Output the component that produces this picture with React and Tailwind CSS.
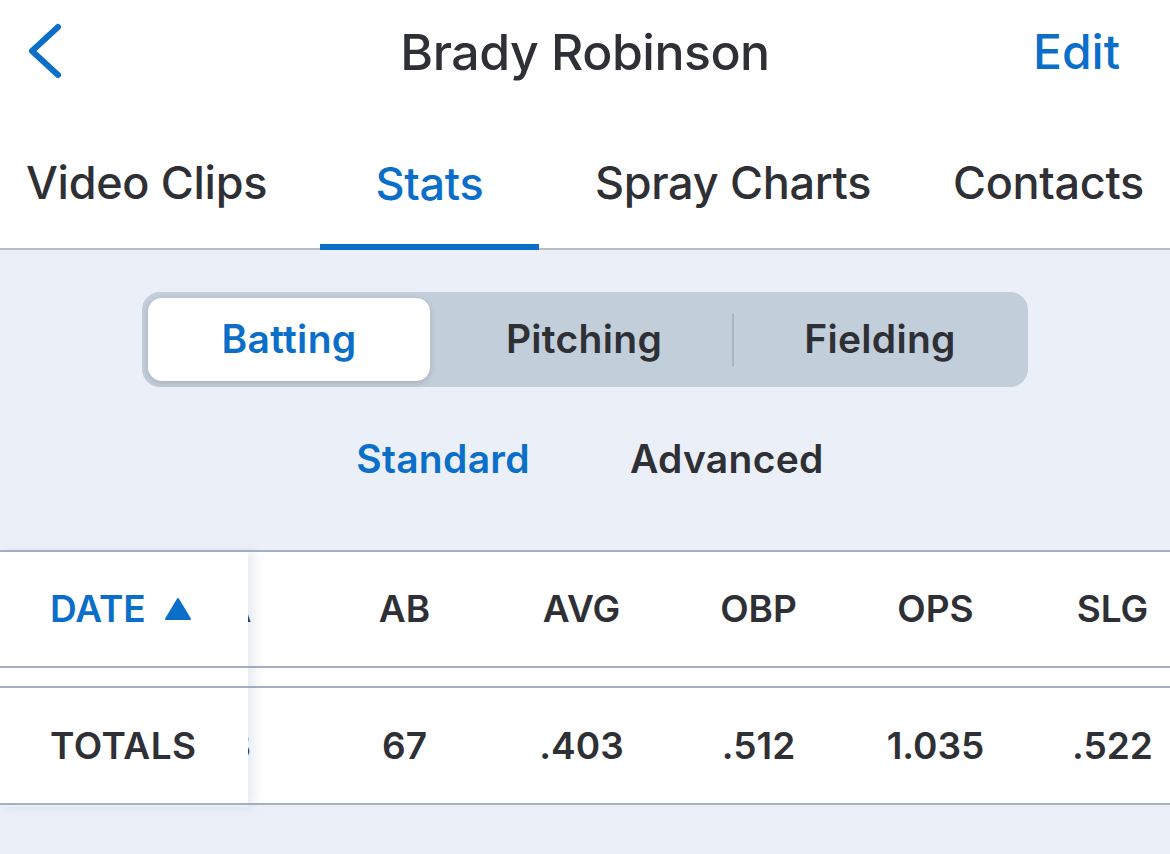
import React from "react";

const cols = [
  { key: "PA", total: "83" },
  { key: "AB", total: "67" },
  { key: "AVG", total: ".403" },
  { key: "OBP", total: ".512" },
  { key: "OPS", total: "1.035" },
  { key: "SLG", total: ".522" },
];

function App() {
  return (
    <div
      className="w-[1170px] h-[854px] overflow-hidden bg-[#ebf0f8] text-[#2e3035]"
      style={{ fontFamily: "Inter, 'Noto Sans', sans-serif" }}
    >
      {/* NAV */}
      <div className="bg-white">
        <div className="h-[104px] grid grid-cols-[1fr_auto_1fr] items-center px-[28px]">
          <svg width="36" height="56" viewBox="0 0 36 56" className="-mt-[2px]">
            <path
              d="M30 4 L4 28 L30 52"
              fill="none"
              stroke="#0b6fca"
              strokeWidth="6"
              strokeLinecap="round"
              strokeLinejoin="round"
            />
          </svg>
          <h1 className="text-[50px] font-medium tracking-[-0.5px]">
            Brady Robinson
          </h1>
          <span className="text-[48px] font-medium text-[#0b6fca] pr-[22px] justify-self-end">Edit</span>
        </div>

        {/* TABS */}
        <div className="flex h-[146px] border-b-2 border-[#b5bdc9]">
          <div className="w-[320px] flex items-center pl-[26px] pt-[14px] text-[45px] font-medium tracking-[-0.3px]">
            Video Clips
          </div>
          <div className="w-[219px] flex items-center justify-center pt-[20px] text-[45px] font-medium tracking-[-0.3px] text-[#0b6fca] border-b-[6px] border-[#0b6fca] -mb-[2px]">
            Stats
          </div>
          <div className="w-[388px] flex items-center justify-center pt-[14px] text-[45px] font-medium tracking-[-0.3px]">
            Spray Charts
          </div>
          <div className="w-[243px] flex items-center justify-center pt-[14px] text-[45px] font-medium tracking-[-0.3px] whitespace-nowrap">
            Contacts
          </div>
        </div>
      </div>

      {/* SEGMENTED */}
      <div className="flex justify-center pt-[42px]">
        <div className="w-[886px] h-[95px] rounded-[18px] bg-[#c3cedb] p-[6px] flex items-center">
          <div className="w-[282px] h-full rounded-[14px] bg-white shadow-[0_2px_6px_rgba(0,0,0,0.15)] flex items-center justify-center text-[39px] font-semibold text-[#0b6fca] tracking-[0.3px]">
            Batting
          </div>
          <div className="flex-1 flex items-center justify-center text-[39px] font-semibold pl-[6px] tracking-[0.3px]">
            Pitching
          </div>
          <div className="w-[2px] h-[52px] bg-[#aab5c3]" />
          <div className="w-[288px] flex items-center justify-center text-[39px] font-semibold pl-[4px] tracking-[0.3px]">
            Fielding
          </div>
        </div>
      </div>

      {/* SUB TABS */}
      <div className="flex justify-center gap-[100px] h-[163px] items-center text-[39px] font-semibold pb-[18px] tracking-[0.3px]">
        <span className="text-[#0b6fca] ml-[10px]">Standard</span>
        <span>Advanced</span>
      </div>

      {/* TABLE */}
      <div className="relative border-t-2 border-[#a5b0c0] text-[37px] font-semibold">
        <div className="flex flex-col">
          <div className="h-[116px] bg-white flex items-center border-b-2 border-[#a5b0c0] pl-[139px]">
            {cols.map((c) => (
              <div key={c.key} className="w-[177px] shrink-0 text-center">
                {c.key}
              </div>
            ))}
          </div>
          <div className="h-[18px] bg-white" />
          <div className="h-[119px] bg-white flex items-center border-y-2 border-[#a5b0c0] pl-[139px]">
            {cols.map((c) => (
              <div key={c.key} className="w-[177px] shrink-0 text-center">
                {c.total}
              </div>
            ))}
          </div>
        </div>

        {/* sticky first column */}
        <div className="absolute left-0 top-0 w-[248px] h-[255px] flex flex-col shadow-[6px_0_10px_rgba(120,140,170,0.18)]">
          <div className="h-[116px] bg-white flex items-center pl-[50px] gap-[18px] text-[#0b6fca] border-b-2 border-[#a5b0c0]">
            DATE
            <svg width="28" height="24" viewBox="0 0 28 24">
              <path d="M14 2 L26 22 L2 22 Z" fill="#0b6fca" stroke="#0b6fca" strokeWidth="2" strokeLinejoin="round" />
            </svg>
          </div>
          <div className="h-[18px] bg-white" />
          <div className="h-[119px] bg-white flex items-center pl-[50px] border-y-2 border-[#a5b0c0] tracking-[0.5px]">
            TOTALS
          </div>
        </div>
      </div>
    </div>
  );
}

export default App;
